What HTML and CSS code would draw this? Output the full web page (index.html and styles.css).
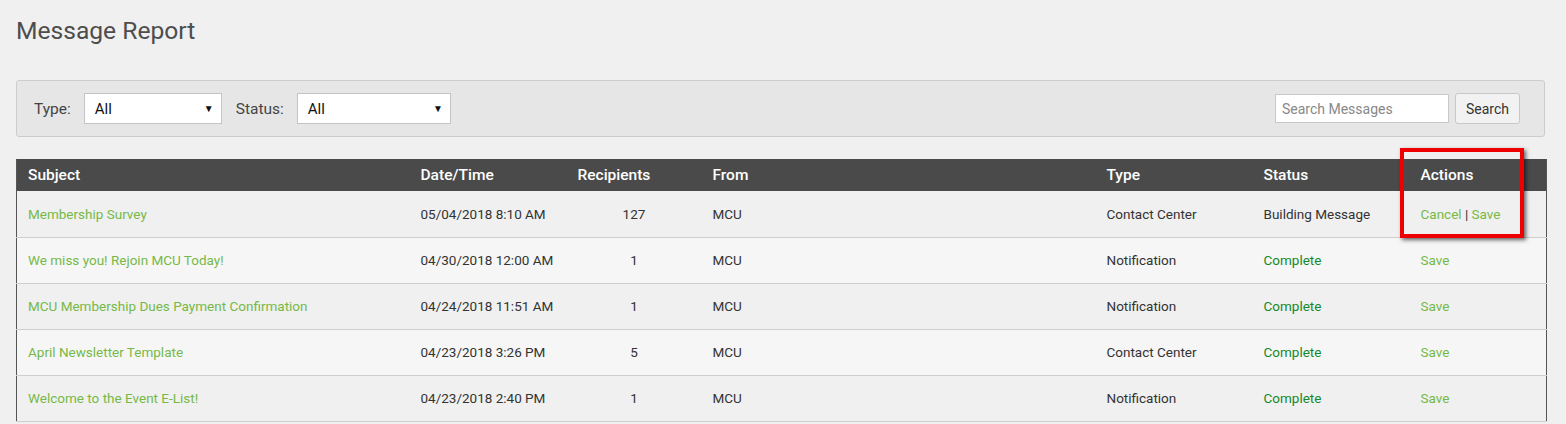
FILE: index.html
```html
<!DOCTYPE html>
<html lang="en">
<head>
<meta charset="utf-8">
<title>Message Report</title>
<link rel="stylesheet" href="styles.css">
</head>
<body>
<h1 class="page-title">Message Report</h1>

<div class="filter-bar">
  <div class="filters">
    <label class="filter-label">Type:</label>
    <div class="select select-type"><span class="select-value">All</span><span class="select-arrow">&#9660;</span></div>
    <label class="filter-label">Status:</label>
    <div class="select select-status"><span class="select-value">All</span><span class="select-arrow">&#9660;</span></div>
  </div>
  <div class="search">
    <input class="search-input" type="text" placeholder="Search Messages">
    <button class="search-btn" type="button">Search</button>
  </div>
</div>

<div class="table-wrap">
  <table class="report">
    <colgroup>
      <col class="c-subject"><col class="c-date"><col class="c-rec"><col class="c-from"><col class="c-type"><col class="c-status"><col class="c-actions">
    </colgroup>
    <thead>
      <tr><th>Subject</th><th>Date/Time</th><th>Recipients</th><th>From</th><th>Type</th><th>Status</th><th>Actions</th></tr>
    </thead>
    <tbody>
      <tr>
        <td><a class="link">Membership Survey</a></td><td>05/04/2018 8:10 AM</td><td class="num">127</td><td>MCU</td><td>Contact Center</td><td>Building Message</td><td><a class="link">Cancel</a> | <a class="link">Save</a></td>
      </tr>
      <tr>
        <td><a class="link">We miss you! Rejoin MCU Today!</a></td><td>04/30/2018 12:00 AM</td><td class="num">1</td><td>MCU</td><td>Notification</td><td class="complete">Complete</td><td><a class="link">Save</a></td>
      </tr>
      <tr>
        <td><a class="link">MCU Membership Dues Payment Confirmation</a></td><td>04/24/2018 11:51 AM</td><td class="num">1</td><td>MCU</td><td>Notification</td><td class="complete">Complete</td><td><a class="link">Save</a></td>
      </tr>
      <tr>
        <td><a class="link">April Newsletter Template</a></td><td>04/23/2018 3:26 PM</td><td class="num">5</td><td>MCU</td><td>Contact Center</td><td class="complete">Complete</td><td><a class="link">Save</a></td>
      </tr>
      <tr>
        <td><a class="link">Welcome to the Event E-List!</a></td><td>04/23/2018 2:40 PM</td><td class="num">1</td><td>MCU</td><td>Notification</td><td class="complete">Complete</td><td><a class="link">Save</a></td>
      </tr>
    </tbody>
  </table>
  <div class="highlight-box"></div>
</div>
</body>
</html>
```

FILE: styles.css
```css
* { box-sizing: border-box; }

html, body {
  margin: 0;
  background: #f0f0f0;
}

body {
  padding: 16px 21px 0 16px;
  font-family: Roboto, "Liberation Sans", sans-serif;
  font-size: 13.5px;
  color: #333;
  overflow: hidden;
}

.page-title {
  margin: 0 0 34px;
  font-size: 24.6px;
  line-height: 30px;
  font-weight: 400;
  color: #4d4d4d;
}

.filter-bar {
  display: flex;
  align-items: center;
  justify-content: space-between;
  background: #e6e6e6;
  border: 1px solid #cccccc;
  border-radius: 3px;
  padding: 12px 24px 12px 17px;
  height: 57px;
}

.filters {
  display: flex;
  align-items: center;
}

.filter-label {
  font-size: 15.5px;
  color: #444;
  margin-right: 13px;
}

.select {
  display: flex;
  align-items: center;
  justify-content: space-between;
  height: 31px;
  background: #fff;
  border: 1px solid #c4c4c4;
  padding: 0 7px 0 10px;
  margin-right: 14px;
  font-size: 15px;
  color: #111;
}

.select-type { width: 138px; }
.select-status { width: 154px; }

.select-arrow {
  font-size: 10px;
  color: #111;
}

.search {
  display: flex;
  align-items: center;
  gap: 6px;
}

.search-input {
  width: 174px;
  height: 29px;
  border: 1px solid #c8c8c8;
  background: #fff;
  padding: 0 6px;
  font-family: Roboto, "Liberation Sans", sans-serif;
  font-size: 14px;
  color: #333;
  outline: none;
}

.search-input::placeholder { color: #888; }

.search-btn {
  height: 31px;
  width: 65px;
  border: 1px solid #c8c8c8;
  border-radius: 3px;
  background: #f2f2f2;
  font-family: Roboto, "Liberation Sans", sans-serif;
  font-size: 14px;
  color: #333;
  padding: 0;
}

.table-wrap {
  position: relative;
  margin-top: 22px;
}

.report {
  width: 100%;
  border-collapse: collapse;
  table-layout: fixed;
  border-left: 1px solid #555;
  border-right: 1px solid #555;
}

.c-subject { width: 393px; }
.c-date { width: 157px; }
.c-rec { width: 135px; }
.c-from { width: 394px; }
.c-type { width: 157px; }
.c-status { width: 157px; }
.c-actions { width: 137px; }

.report th {
  background: #4a4a4a;
  color: #fff;
  font-weight: 500;
  font-size: 15.5px;
  text-align: left;
  height: 32px;
  padding: 0 11px;
}

.report td {
  height: 46px;
  padding: 0 11px;
  border-bottom: 1px solid #cfcfcf;
  white-space: nowrap;
  color: #333;
}

.report tbody tr:nth-child(odd) td { background: #f0f0f0; }
.report tbody tr:nth-child(even) td { background: #f6f6f6; }

.report td.num { text-align: center; }

.link { color: #76b947; text-decoration: none; }

.report td.complete { color: #13892b; }

.highlight-box {
  position: absolute;
  left: 1384px;
  top: -11px;
  width: 124px;
  height: 90px;
  border: 4px solid #ee0000;
  box-shadow: 2px 2px 4px rgba(0, 0, 0, 0.6);
}
```
